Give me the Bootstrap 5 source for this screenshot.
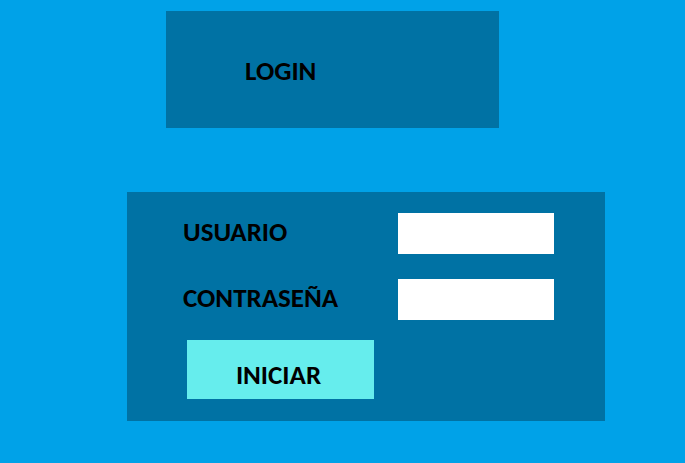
<!DOCTYPE html>
<html lang="es">
<head>
<meta charset="utf-8">
<meta name="viewport" content="width=device-width, initial-scale=1">
<title>Login</title>
<link href="https://cdn.jsdelivr.net/npm/bootstrap@5.3.0/dist/css/bootstrap.min.css" rel="stylesheet">
<style>
  body { background: #00a2e8; color: #000; font-family: Calibri, Carlito, Lato, sans-serif; font-size: 27px; line-height: 32px; font-weight: 700; }
  .page { padding: 11px 80px 42px 127px; gap: 64px; }
  .panel { background: #0072a4; }
  .banner { margin: 0 106px 0 39px; padding: 44px 79px 41px; }
  .banner h1 { font-size: 27px; line-height: 32px; font-weight: 700; }
  .login-form { padding: 21px 51px 22px 56px; }
  .field + .field { margin-top: 25px; }
  .field label { width: 58%; padding-bottom: 4px; }
  .field .form-control { height: 41px; }
  .btn-start { width: 187px; height: 59px; margin-top: 20px; padding: 10px 4px 0 0; background: #66eded; color: #000; font-size: 27px; line-height: 32px; font-weight: 700; }
  .btn-start:hover { background: #8df3f3; }
</style>
</head>
<body>
<main class="page d-flex flex-column">
  <header class="panel banner">
    <h1 class="m-0">LOGIN</h1>
  </header>
  <form class="panel login-form">
    <div class="field d-flex align-items-center">
      <label class="flex-shrink-0" for="usuario">USUARIO</label>
      <input class="form-control rounded-0 border-0" type="text" id="usuario" autocomplete="username">
    </div>
    <div class="field d-flex align-items-center">
      <label class="flex-shrink-0" for="contrasena">CONTRASEÑA</label>
      <input class="form-control rounded-0 border-0" type="password" id="contrasena" autocomplete="current-password">
    </div>
    <button class="btn btn-start d-block ms-1 rounded-0 border-0" type="submit">INICIAR</button>
  </form>
</main>
<script src="https://cdn.jsdelivr.net/npm/bootstrap@5.3.0/dist/js/bootstrap.bundle.min.js"></script>
</body>
</html>
